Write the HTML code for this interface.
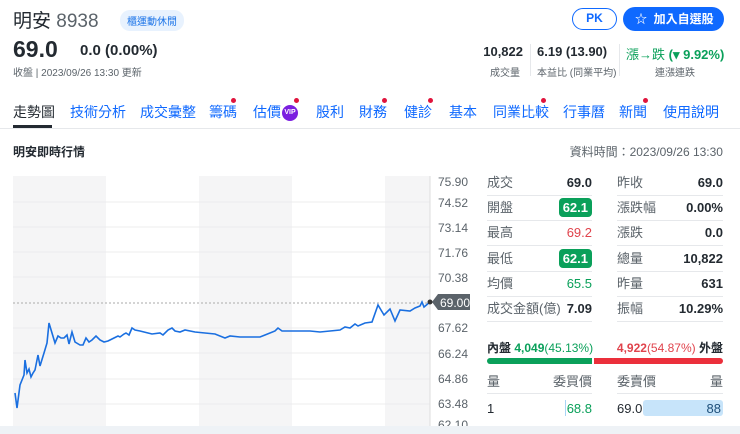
<!DOCTYPE html><html><head><meta charset="utf-8"><style>
*{margin:0;padding:0;box-sizing:border-box}
body{width:740px;height:434px;overflow:hidden;background:#fff;font-family:"Liberation Sans","Noto Sans CJK TC",sans-serif;color:#232a31;position:relative}
.a{position:absolute;white-space:nowrap}
.tab{position:absolute;top:103px;font-size:14px;color:#0f69ff;line-height:18px}
.dot{position:absolute;width:5px;height:5px;border-radius:50%;background:#e0143c}
.r{position:absolute;font-size:13px;line-height:18px;white-space:nowrap}
.ln{position:absolute;height:1px;background:#e6e8eb}
.g{background:#0aa05a;color:#fff;border-radius:4px;padding:2px 4px;font-weight:bold}
</style></head><body>
<div class="a" style="left:13px;top:6px;font-size:19px;color:#232a31">明安 <span style="color:#5b636a;font-weight:300">8938</span></div>
<div class="a" style="left:120px;top:10px;background:#e8f2fe;color:#1a73e8;font-size:10px;padding:3px 7px;border-radius:10px">櫃運動休閒</div>
<div class="a" style="left:13px;top:36px;font-size:23px;font-weight:bold">69.0</div>
<div class="a" style="left:80px;top:42px;font-size:15px;font-weight:bold">0.0 (0.00%)</div>
<div class="a" style="left:13px;top:64px;font-size:10px;color:#5b636a">收盤 | 2023/09/26 13:30 更新</div>
<div class="a" style="left:572px;top:8px;width:45px;height:22px;border:1.5px solid #0f69ff;border-radius:12px;color:#0f69ff;font-size:12px;font-weight:bold;text-align:center;line-height:19px">PK</div>
<div class="a" style="left:623px;top:7px;width:101px;height:24px;background:#0f69ff;border-radius:12px;color:#fff;font-size:12px;font-weight:bold;line-height:24px;padding-left:12px">☆&nbsp; 加入自選股</div>
<div class="a" style="left:480px;top:44px;width:43px;text-align:right;font-size:13px;font-weight:bold">10,822</div>
<div class="a" style="left:480px;top:64px;width:40px;text-align:right;font-size:10px;color:#5b636a">成交量</div>
<div class="ln" style="left:530px;top:44px;width:1px;height:32px"></div>
<div class="a" style="left:537px;top:44px;font-size:13px;font-weight:bold">6.19 (13.90)</div>
<div class="a" style="left:537px;top:64px;font-size:10px;color:#5b636a">本益比 (同業平均)</div>
<div class="ln" style="left:619px;top:44px;width:1px;height:32px"></div>
<div class="a" style="left:626px;top:44px;font-size:13px;color:#0aa05a"><span>漲→跌</span> <b>(▾ 9.92%)</b></div>
<div class="a" style="left:655px;top:64px;font-size:10px;color:#5b636a">連漲連跌</div>
<div class="tab" style="left:13px;color:#232a31">走勢圖</div>
<div class="a" style="left:13px;top:125px;width:39px;height:3px;background:#232a31"></div>
<div class="tab" style="left:70px">技術分析</div>
<div class="tab" style="left:140px">成交彙整</div>
<div class="tab" style="left:209px">籌碼</div><div class="dot" style="left:231px;top:98px"></div>
<div class="tab" style="left:253px">估價</div>
<div class="a" style="left:282px;top:105px;width:16px;height:16px;border-radius:50%;background:#7b1fe0;color:#fff;font-size:7px;font-weight:bold;text-align:center;line-height:16px">VIP</div><div class="dot" style="left:294px;top:98px"></div>
<div class="tab" style="left:316px">股利</div>
<div class="tab" style="left:359px">財務</div><div class="dot" style="left:382px;top:98px"></div>
<div class="tab" style="left:404px">健診</div><div class="dot" style="left:428px;top:98px"></div>
<div class="tab" style="left:449px">基本</div>
<div class="tab" style="left:493px">同業比較</div><div class="dot" style="left:541px;top:98px"></div>
<div class="tab" style="left:563px">行事曆</div>
<div class="tab" style="left:619px">新聞</div><div class="dot" style="left:643px;top:98px"></div>
<div class="tab" style="left:663px">使用說明</div>
<div class="ln" style="left:0;top:128px;width:740px"></div>
<div class="a" style="left:13px;top:143px;font-size:12px;font-weight:bold">明安即時行情</div>
<div class="a" style="right:17px;top:143px;font-size:12px;color:#5b636a">資料時間：2023/09/26 13:30</div>
<svg class="a" style="left:0;top:170px" width="480" height="264">
<rect x="13" y="6" width="93" height="250" fill="#f5f5f6"/><rect x="199" y="6" width="93" height="250" fill="#f5f5f6"/><rect x="385" y="6" width="45" height="250" fill="#f5f5f6"/>
<g stroke="#ececee" stroke-width="1"><line x1="13" x2="430" y1="32" y2="32"/><line x1="13" x2="430" y1="57" y2="57"/><line x1="13" x2="430" y1="82" y2="82"/><line x1="13" x2="430" y1="107" y2="107"/><line x1="13" x2="430" y1="158" y2="158"/><line x1="13" x2="430" y1="183" y2="183"/><line x1="13" x2="430" y1="209" y2="209"/><line x1="13" x2="430" y1="234" y2="234"/></g>
<line x1="430" x2="430" y1="6" y2="256" stroke="#ddd"/>
<line x1="13" x2="430" y1="133" y2="133" stroke="#aaa" stroke-dasharray="2,2"/>
<polyline fill="none" stroke="#1a6fe0" stroke-width="1.6" transform="translate(0,-170)" points="15,393 17,408 20,385 24,375 25,360 27,373 29,369 31,377 33,373 35,370 38,355 40,366 44,353 47,343 49,323 52,333 55,343 58,336 61,338 64,338 67,335 69,344 72,332 75,342 80,345 83,345 86,338 89,342 92,340 96,336 100,340 104,342 108,341 114,338 118,336 120,337 124,334 126,333 129,335 132,328 135,330 140,331 148,333 152,334 160,333 163,335 168,330 172,328 175,331 180,332 185,330 195,332 205,333 215,334 225,338 230,336 240,337 260,337 265,335 275,331 278,328 282,331 285,331 300,331 310,331 320,332 330,331 340,330 345,327 350,328 355,324 358,326 365,323 372,322 378,305 384,315 390,309 395,321 400,310 410,311 415,308 420,306 422,302 424,307 430,302"/>
<circle cx="430" cy="132" r="2.5" fill="#333"/>
<path d="M432 132 L438 124 H470 V140 H438 Z" fill="#5b636a"/>
<text x="440" y="137" font-size="12" fill="#fff" font-family="Liberation Sans">69.00</text>
<g font-size="12" fill="#5b636a" font-family="Liberation Sans"><text x="438" y="16">75.90</text><text x="438" y="37">74.52</text><text x="438" y="62">73.14</text><text x="438" y="87">71.76</text><text x="438" y="112">70.38</text><text x="438" y="162">67.62</text><text x="438" y="188">66.24</text><text x="438" y="213">64.86</text><text x="438" y="238">63.48</text><text x="438" y="259">62.10</text></g>
</svg>
<div class="r" style="left:487px;top:174px;color:#5b636a">成交</div><div class="r" style="left:540px;width:52px;top:174px;text-align:right;font-weight:bold">69.0</div>
<div class="r" style="left:617px;top:174px;color:#5b636a">昨收</div><div class="r" style="left:660px;width:63px;top:174px;text-align:right;font-weight:bold">69.0</div>
<div class="r" style="left:487px;top:199px;color:#5b636a">開盤</div><div class="r" style="left:540px;width:52px;top:199px;text-align:right"><span class="g">62.1</span></div>
<div class="r" style="left:617px;top:199px;color:#5b636a">漲跌幅</div><div class="r" style="left:660px;width:63px;top:199px;text-align:right;font-weight:bold">0.00%</div>
<div class="r" style="left:487px;top:224px;color:#5b636a">最高</div><div class="r" style="left:540px;width:52px;top:224px;text-align:right;color:#e0434c">69.2</div>
<div class="r" style="left:617px;top:224px;color:#5b636a">漲跌</div><div class="r" style="left:660px;width:63px;top:224px;text-align:right;font-weight:bold">0.0</div>
<div class="r" style="left:487px;top:250px;color:#5b636a">最低</div><div class="r" style="left:540px;width:52px;top:250px;text-align:right"><span class="g">62.1</span></div>
<div class="r" style="left:617px;top:250px;color:#5b636a">總量</div><div class="r" style="left:660px;width:63px;top:250px;text-align:right;font-weight:bold">10,822</div>
<div class="r" style="left:487px;top:275px;color:#5b636a">均價</div><div class="r" style="left:540px;width:52px;top:275px;text-align:right;color:#0aa05a">65.5</div>
<div class="r" style="left:617px;top:275px;color:#5b636a">昨量</div><div class="r" style="left:660px;width:63px;top:275px;text-align:right;font-weight:bold">631</div>
<div class="r" style="left:487px;top:300px;color:#5b636a">成交金額(億)</div><div class="r" style="left:540px;width:52px;top:300px;text-align:right;font-weight:bold">7.09</div>
<div class="r" style="left:617px;top:300px;color:#5b636a">振幅</div><div class="r" style="left:660px;width:63px;top:300px;text-align:right;font-weight:bold">10.29%</div>
<div class="ln" style="left:487px;top:195px;width:105px"></div><div class="ln" style="left:617px;top:195px;width:106px"></div>
<div class="ln" style="left:487px;top:220px;width:105px"></div><div class="ln" style="left:617px;top:220px;width:106px"></div>
<div class="ln" style="left:487px;top:245px;width:105px"></div><div class="ln" style="left:617px;top:245px;width:106px"></div>
<div class="ln" style="left:487px;top:271px;width:105px"></div><div class="ln" style="left:617px;top:271px;width:106px"></div>
<div class="ln" style="left:487px;top:296px;width:105px"></div><div class="ln" style="left:617px;top:296px;width:106px"></div>
<div class="ln" style="left:487px;top:321px;width:105px"></div><div class="ln" style="left:617px;top:321px;width:106px"></div>
<div class="r" style="left:487px;top:339px;font-size:12px"><b>內盤</b> <span style="color:#0aa05a"><b>4,049</b>(45.13%)</span></div>
<div class="r" style="right:17px;top:339px;font-size:12px"><span style="color:#e0434c"><b>4,922</b>(54.87%)</span> <b>外盤</b></div>
<div class="a" style="left:487px;top:358px;width:105px;height:6px;background:#0aa05a;border-radius:3px 0 0 3px"></div>
<div class="a" style="left:594px;top:358px;width:129px;height:6px;background:#eb2f3b;border-radius:0 3px 3px 0"></div>
<div class="r" style="left:487px;top:373px;color:#5b636a">量</div><div class="r" style="left:540px;width:52px;top:373px;text-align:right;color:#5b636a">委買價</div>
<div class="r" style="left:617px;top:373px;color:#5b636a">委賣價</div><div class="r" style="left:660px;width:63px;top:373px;text-align:right;color:#5b636a">量</div>
<div class="ln" style="left:487px;top:393px;width:105px"></div><div class="ln" style="left:617px;top:393px;width:106px"></div>
<div class="r" style="left:487px;top:400px">1</div>
<div class="a" style="left:565px;top:400px;width:1px;height:16px;background:#a8d4f5"></div>
<div class="r" style="left:540px;width:52px;top:400px;text-align:right;color:#0aa05a">68.8</div>
<div class="r" style="left:617px;top:400px">69.0</div>
<div class="a" style="left:643px;top:400px;width:80px;height:16px;background:#c7e4fa;border-radius:3px"></div>
<div class="r" style="left:660px;width:61px;top:400px;text-align:right;color:#1d4f7a">88</div>
<div class="a" style="left:0;top:426px;width:740px;height:8px;background:#eef2f6"></div>
</body></html>
